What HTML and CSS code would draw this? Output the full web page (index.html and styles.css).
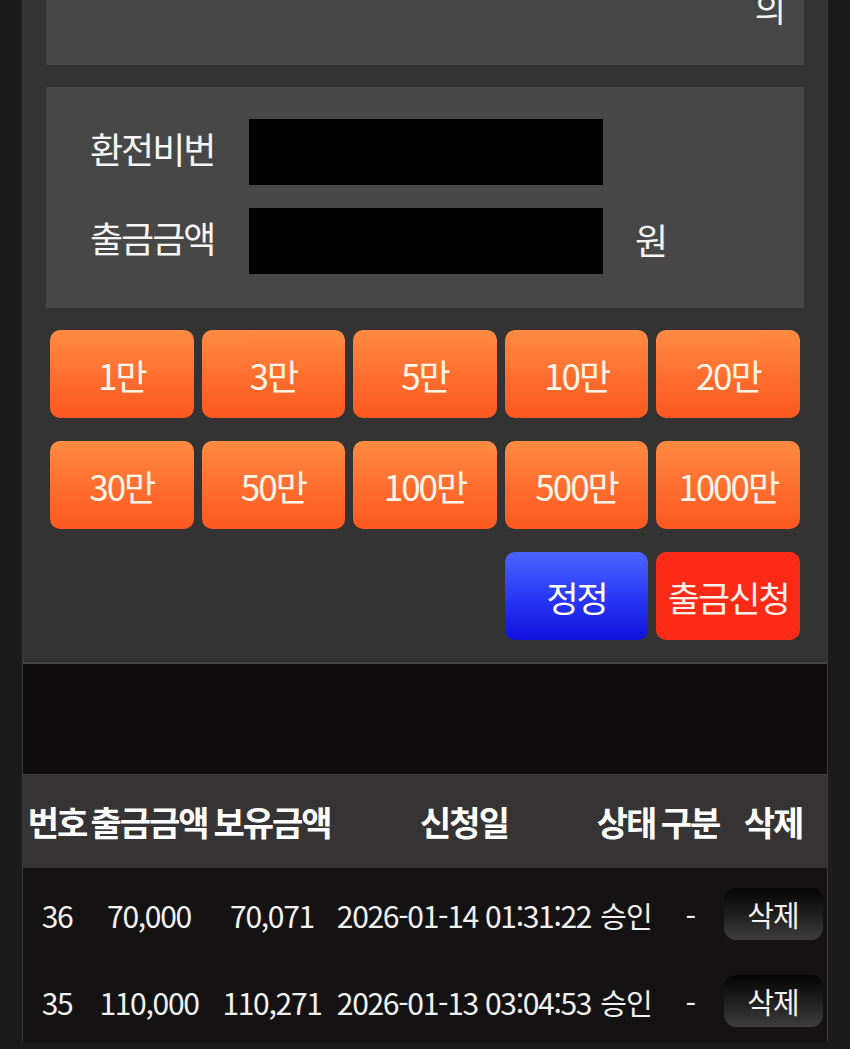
FILE: index.html
```html
<!DOCTYPE html>
<html lang="ko">
<head>
<meta charset="utf-8">
<title>출금신청</title>
<link rel="stylesheet" href="styles.css">
</head>
<body>
<div class="wrap">
  <section class="panel">
    <div class="notice"><span>의</span></div>
    <div class="form-box">
      <div class="form-row">
        <label class="form-label">환전비번</label>
        <div class="form-input"></div>
      </div>
      <div class="form-row">
        <label class="form-label">출금금액</label>
        <div class="form-input"></div>
        <span class="unit">원</span>
      </div>
    </div>
    <div class="btn-grid">
      <button class="btn amt">1만</button>
      <button class="btn amt">3만</button>
      <button class="btn amt">5만</button>
      <button class="btn amt">10만</button>
      <button class="btn amt">20만</button>
      <button class="btn amt">30만</button>
      <button class="btn amt">50만</button>
      <button class="btn amt">100만</button>
      <button class="btn amt">500만</button>
      <button class="btn amt">1000만</button>
      <button class="btn reset">정정</button>
      <button class="btn submit">출금신청</button>
    </div>
  </section>
  <div class="spacer"></div>
  <section class="table">
    <div class="thead">
      <div>번호</div><div>출금금액</div><div>보유금액</div><div>신청일</div><div>상태</div><div>구분</div><div>삭제</div>
    </div>
    <div class="trow">
      <div>36</div><div>70,000</div><div>70,071</div><div>2026-01-14 01:31:22</div><div class="ko">승인</div><div>-</div><div class="act"><button class="del">삭제</button></div>
    </div>
    <div class="trow">
      <div>35</div><div>110,000</div><div>110,271</div><div>2026-01-13 03:04:53</div><div class="ko">승인</div><div>-</div><div class="act"><button class="del">삭제</button></div>
    </div>
  </section>
</div>
</body>
</html>
```
FILE: styles.css
```css
html, body {
  margin: 0;
  padding: 0;
  background: #1b1b1b;
  font-family: "Noto Sans CJK KR", "Noto Sans", sans-serif;
  color: #f4f4f4;
  overflow: hidden;
}

.wrap {
  margin-left: 22px;
  width: 806px;
  box-sizing: border-box;
  border-left: 1px solid #3a3a3a;
  border-right: 1px solid #3a3a3a;
}

.panel {
  background: #333333;
  padding: 0 23px 22px;
  border-bottom: 2px solid #454545;
}

.notice {
  margin-top: -40px;
  height: 105px;
  box-sizing: border-box;
  background: #474747;
  text-align: right;
  padding: 28px 18px 0 0;
  font-size: 34px;
  line-height: 40px;
}

.form-box {
  margin-top: 22px;
  height: 221px;
  box-sizing: border-box;
  background: #474747;
  padding: 32px 0 0 44px;
  display: flex;
  flex-direction: column;
  gap: 23px;
}

.form-row {
  display: flex;
  align-items: center;
  height: 66px;
}

.form-label {
  width: 159px;
  font-size: 36px;
  line-height: 44px;
  letter-spacing: -2px;
  padding-bottom: 8px;
  color: #f6f6f6;
}

.form-input {
  width: 354px;
  height: 66px;
  background: #000;
}

.unit {
  margin-left: 32px;
  font-size: 36px;
  line-height: 44px;
  padding-bottom: 4px;
}

.btn-grid {
  margin-top: 22px;
  padding: 0 4px;
  display: grid;
  grid-template-columns: repeat(5, 1fr);
  grid-auto-rows: 88px;
  column-gap: 8px;
  row-gap: 23px;
}

.btn {
  border: none;
  border-radius: 10px;
  font-family: "Noto Sans CJK KR", "Noto Sans", sans-serif;
  font-size: 35px;
  color: #fff6ea;
  padding: 0;
  letter-spacing: -2px;
}

.amt {
  background: linear-gradient(to bottom, #ff8b42 0%, #ff6a2c 60%, #fd5820 100%);
}

.reset {
  grid-column: 4;
  background: linear-gradient(to bottom, #4c64ff 0%, #2a3af5 50%, #1010dd 100%);
  color: #ffffff;
}

.submit {
  grid-column: 5;
  background: #fb2a16;
  color: #fff0ea;
}

.spacer {
  height: 110px;
  background: #0f0d0e;
}

.table {
  border-top: 1px solid #464446;
}

.thead,
.trow {
  display: grid;
  grid-template-columns: 68px 116px 130px 254px 70px 58px 108px;
  align-items: center;
  text-align: center;
  white-space: nowrap;
}

.thead {
  height: 93px;
  background: #353334;
  font-size: 34px;
  font-weight: 700;
  letter-spacing: -2px;
  color: #ffffff;
}

.trow {
  height: 87px;
  background: #141213;
  font-size: 30px;
  color: #f2f2f2;
  letter-spacing: -1.3px;
}

.trow > div {
  padding-top: 6px;
}

.trow > .act {
  padding-top: 0;
}

.trow .ko {
  font-size: 29px;
  letter-spacing: -1px;
}

.trow > div,
.thead > div {
  display: flex;
  justify-content: center;
  overflow: visible;
}

.del {
  width: 99px;
  height: 52px;
  margin-top: 4px;
  border: none;
  border-radius: 12px;
  background: linear-gradient(to bottom, #050505 0%, #1c1b1c 45%, #3f3e3f 100%);
  color: #f4f4f4;
  font-family: "Noto Sans CJK KR", "Noto Sans", sans-serif;
  font-size: 29px;
  letter-spacing: -1px;
  padding: 0;
}
```
